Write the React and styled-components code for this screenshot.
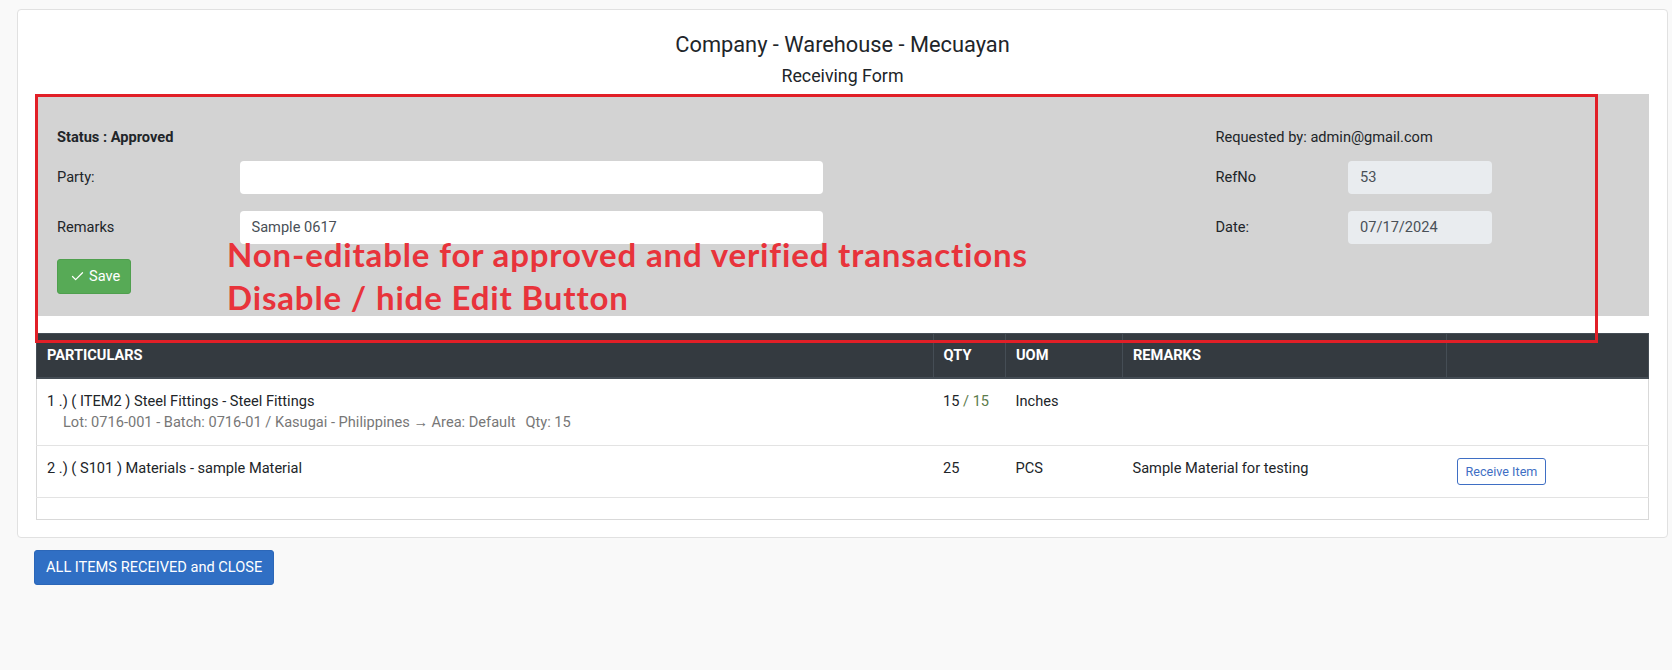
import React from 'react'
import styled, { createGlobalStyle } from 'styled-components'
import { Check } from 'lucide-react'

const GlobalStyle = createGlobalStyle`
    html, body {
        margin: 0;
        padding: 0;
        background: #f9f9f9;
    }
    body {
        font-family: Roboto, "Liberation Sans", sans-serif;
        font-size: 14.6px;
        color: #212529;
    }
    * {
        box-sizing: border-box;
    }
`

const Page = styled.div`
    padding: 9px 4px 40px 17px;
`

const Card = styled.section`
    background: #fff;
    border: 1px solid #e1e1e1;
    border-radius: 4px;
    padding: 22px 18px 17px;
`

const Heading = styled.header`
    text-align: center;
    margin-bottom: 7px;
`

const Title = styled.h2`
    margin: 0;
    font-size: 21.8px;
    line-height: 1.2;
    font-weight: 400;
`

const Subtitle = styled.h3`
    margin: 7px 0 0;
    font-size: 17.8px;
    line-height: 1.2;
    font-weight: 400;
`

const FormArea = styled.div`
    position: relative;
`

const Panel = styled.div`
    background: #d3d3d3;
    padding: 33px 157px 22px 21px;
    display: flex;
    justify-content: space-between;
    align-items: flex-start;
`

const FormCol = styled.div`
    width: ${p => p.$width}px;
    display: flex;
    flex-direction: column;
`

const StatusLine = styled.div`
    line-height: 20px;
    font-weight: ${p => (p.$bold ? 700 : 400)};
    margin-bottom: 14px;
`

const FieldRow = styled.div`
    display: grid;
    grid-template-columns: ${p => p.$label}px ${p => p.$input}px;
    align-items: center;
    margin-bottom: 17px;
`

const Label = styled.label`
    line-height: 20px;
`

const Input = styled.input`
    height: 33px;
    width: 100%;
    border: none;
    border-radius: 4px;
    padding: 0 12px;
    font-family: inherit;
    font-size: 14.6px;
    color: #495057;
    background: ${p => (p.disabled ? '#e9ecef' : '#fff')};
    outline: none;
`

const SaveButton = styled.button`
    align-self: flex-start;
    display: inline-flex;
    align-items: center;
    gap: 4px;
    height: 35px;
    margin-top: -2px;
    padding: 0 10px 0 12px;
    background: #57aa56;
    color: #fff;
    border: 1px solid #4f9f4e;
    border-radius: 3px;
    font-family: inherit;
    font-size: 14.6px;
`

const Spacer = styled.div`
    height: 17px;
`

const Table = styled.table`
    width: 100%;
    border-collapse: collapse;
    table-layout: fixed;
    border: 1px solid #d9d9d9;
    border-top: none;
`

const Th = styled.th`
    background: #343a40;
    color: #fff;
    text-align: left;
    font-weight: 700;
    line-height: 20px;
    padding: 11px 10px 12px;
    border: 1px solid #454d55;
    border-bottom: 2px solid #454d55;
`

const Td = styled.td`
    vertical-align: top;
    line-height: 20px;
    padding: 12px 10px;
    border-bottom: 1px solid #e3e3e3;
`

const EmptyCell = styled.td`
    height: 22px;
    padding: 0;
`

const SubLine = styled.div`
    line-height: 22px;
    color: #777;
    padding-left: 16px;
`

const Gap = styled.span`
    margin-left: 10px;
`

const Received = styled.span`
    color: #5d7c4c;
`

const OutlineButton = styled.button`
    height: 27px;
    padding: 0 8px;
    background: #fff;
    color: #3f6fc4;
    border: 1px solid #3f6fc4;
    border-radius: 3px;
    font-family: inherit;
    font-size: 12.6px;
`

const PrimaryButton = styled.button`
    margin: 12px 0 0 17px;
    height: 35px;
    padding: 0 11px;
    background: #306fc4;
    color: #fff;
    border: 1px solid #2c67b8;
    border-radius: 3px;
    font-family: inherit;
    font-size: 14.6px;
`

const NoteBox = styled.div`
    position: absolute;
    left: -1px;
    top: 0;
    width: 1563px;
    height: 249px;
    border: 3px solid #e11f27;
    pointer-events: none;
`

const NoteText = styled.div`
    position: absolute;
    left: 191px;
    top: 139px;
    font-family: Lato, "Open Sans", sans-serif;
    font-weight: 700;
    font-size: 33px;
    letter-spacing: 0.85px;
    line-height: 43px;
    color: #e8333b;
    pointer-events: none;
`

const items = [
    {
        name: '1 .) ( ITEM2 ) Steel Fittings - Steel Fittings',
        lot: 'Lot: 0716-001 - Batch: 0716-01 / Kasugai - Philippines → Area: Default',
        lotQty: 'Qty: 15',
        qty: '15',
        received: '15',
        uom: 'Inches',
        remarks: '',
        pending: false,
    },
    {
        name: '2 .) ( S101 ) Materials - sample Material',
        qty: '25',
        uom: 'PCS',
        remarks: 'Sample Material for testing',
        pending: true,
    },
]

function App() {
    return (
        <Page>
            <GlobalStyle />
            <Card>
                <Heading>
                    <Title>Company - Warehouse - Mecuayan</Title>
                    <Subtitle>Receiving Form</Subtitle>
                </Heading>

                <FormArea>
                    <Panel>
                        <FormCol $width={766}>
                            <StatusLine $bold>Status : Approved</StatusLine>
                            <FieldRow $label={182.5} $input={583}>
                                <Label>Party:</Label>
                                <Input defaultValue="" />
                            </FieldRow>
                            <FieldRow $label={182.5} $input={583}>
                                <Label>Remarks</Label>
                                <Input defaultValue="Sample 0617" />
                            </FieldRow>
                            <SaveButton>
                                <Check size={15} strokeWidth={2} />
                                Save
                            </SaveButton>
                        </FormCol>
                        <FormCol $width={276.5}>
                            <StatusLine>Requested by: admin@gmail.com</StatusLine>
                            <FieldRow $label={132.5} $input={144}>
                                <Label>RefNo</Label>
                                <Input disabled defaultValue="53" />
                            </FieldRow>
                            <FieldRow $label={132.5} $input={144}>
                                <Label>Date:</Label>
                                <Input disabled defaultValue="07/17/2024" />
                            </FieldRow>
                        </FormCol>
                    </Panel>

                    <Spacer />

                    <Table>
                        <colgroup>
                            <col style={{ width: 896.5 }} />
                            <col style={{ width: 72.5 }} />
                            <col style={{ width: 117 }} />
                            <col style={{ width: 324 }} />
                            <col />
                        </colgroup>
                        <thead>
                            <tr>
                                <Th>PARTICULARS</Th>
                                <Th>QTY</Th>
                                <Th>UOM</Th>
                                <Th>REMARKS</Th>
                                <Th></Th>
                            </tr>
                        </thead>
                        <tbody>
                            {items.map(item => (
                                <tr key={item.name}>
                                    <Td>
                                        {item.name}
                                        {item.lot && (
                                            <SubLine>
                                                {item.lot}
                                                <Gap>{item.lotQty}</Gap>
                                            </SubLine>
                                        )}
                                    </Td>
                                    <Td>
                                        {item.qty}
                                        {item.received && <Received> / {item.received}</Received>}
                                    </Td>
                                    <Td>{item.uom}</Td>
                                    <Td>{item.remarks}</Td>
                                    <Td>{item.pending && <OutlineButton>Receive Item</OutlineButton>}</Td>
                                </tr>
                            ))}
                            <tr>
                                <EmptyCell colSpan={5} />
                            </tr>
                        </tbody>
                    </Table>

                    <NoteBox />
                    <NoteText>
                        Non-editable for approved and verified transactions
                        <br />
                        Disable / hide Edit Button
                    </NoteText>
                </FormArea>
            </Card>
            <PrimaryButton>ALL ITEMS RECEIVED and CLOSE</PrimaryButton>
        </Page>
    )
}

export default App
